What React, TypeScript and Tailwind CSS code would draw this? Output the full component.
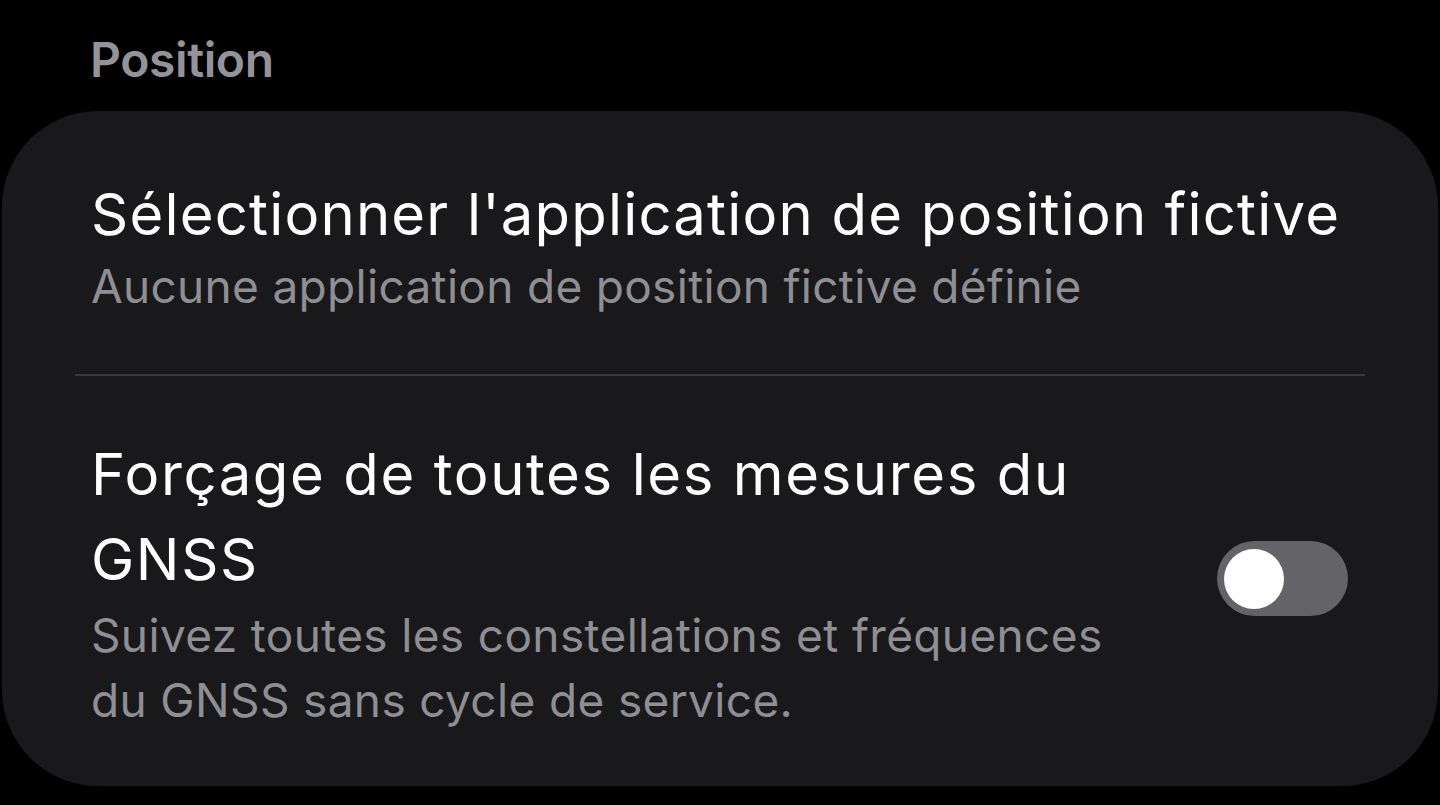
import React from 'react';

const Toggle: React.FC = () => (
  <div className="mt-[109px] flex h-[75px] w-[131px] shrink-0 items-center rounded-full bg-[#646468] px-[7px]">
    <div className="h-[60px] w-[60px] rounded-full bg-white" />
  </div>
);

const App: React.FC = () => {
  return (
    <div className="h-[805px] w-[1440px] overflow-hidden bg-black font-['Inter','Noto_Sans',sans-serif]">
      <div className="pl-[90px] pt-[30px] text-[48px] font-semibold leading-[60px] tracking-[-0.4px] text-[#939399]">Position</div>
      <div className="mx-[2px] mt-[21px] rounded-[96px] bg-[#19191b] pb-[53px]">
        <div className="pb-[58px] pl-[89px] pr-[60px] pt-[68px]">
          <div className="text-[58px] leading-[70px] tracking-[1.2px] text-white">Sélectionner l'application de position fictive</div>
          <div className="mt-[7px] text-[46px] leading-[60px] tracking-[0.3px] text-[#8e8e93]">Aucune application de position fictive définie</div>
        </div>
        <div className="mx-[73px] h-[2px] bg-[#38383a]" />
        <div className="flex items-start justify-between pl-[89px] pr-[90px] pt-[56px]">
          <div className="w-[1040px]">
            <div className="text-[58px] leading-[85px] tracking-[1.6px] text-white">Forçage de toutes les mesures du GNSS</div>
            <div className="mt-[1px] text-[46px] leading-[65px] tracking-[0.35px] text-[#8e8e93]">Suivez toutes les constellations et fréquences du GNSS sans cycle de service.</div>
          </div>
          <Toggle />
        </div>
      </div>
    </div>
  );
};

export default App;
